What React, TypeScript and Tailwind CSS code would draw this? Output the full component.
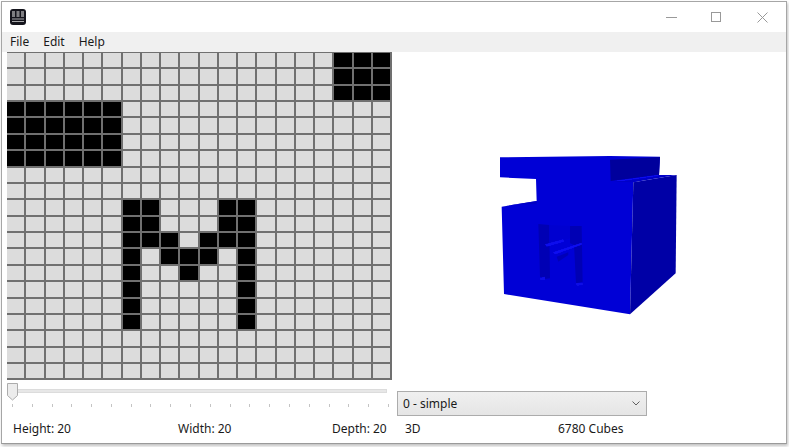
const FONT = "font-['Noto_Sans',sans-serif]";

const blackCells = new Set<string>();
const mark = (r: number, cols: number[]) => cols.forEach((c) => blackCells.add(`${r}-${c}`));
for (let r = 0; r < 3; r++) mark(r, [17, 18, 19]);
for (let r = 3; r < 7; r++) mark(r, [0, 1, 2, 3, 4, 5]);
mark(9, [6, 7, 11, 12]);
mark(10, [6, 7, 11, 12]);
mark(11, [6, 7, 8, 10, 11, 12]);
mark(12, [6, 8, 9, 10, 12]);
mark(13, [6, 9, 12]);
for (let r = 14; r < 17; r++) mark(r, [6, 12]);

function PixelGrid() {
  const cells = [];
  for (let r = 0; r < 20; r++) {
    for (let c = 0; c < 20; c++) {
      cells.push(
        <div key={`${r}-${c}`} className={blackCells.has(`${r}-${c}`) ? "bg-black" : "bg-[#dcdcdc]"} />
      );
    }
  }
  return (
    <div className="grid grid-cols-[repeat(20,1fr)] grid-rows-[repeat(20,1fr)] gap-[2px] w-[385px] h-[333px] bg-[#707070] pr-[2px] pb-[2px] pt-px">
      {cells}
    </div>
  );
}

function AppIcon() {
  return (
    <svg width="16" height="16" viewBox="0 0 16 16">
      <rect x="0" y="0" width="16" height="16" rx="3" fill="#14141c" />
      <g fill="#e8e8e8">
        <rect x="2" y="2.5" width="3" height="1" />
        <rect x="2" y="4.5" width="3" height="1" />
        <rect x="2" y="6.5" width="3" height="1" />
        <rect x="6.5" y="2.5" width="3" height="1" />
        <rect x="6.5" y="4.5" width="3" height="1" />
        <rect x="6.5" y="6.5" width="3" height="1" />
        <rect x="11" y="2.5" width="3" height="1" />
        <rect x="11" y="4.5" width="3" height="1" />
        <rect x="11" y="6.5" width="3" height="1" />
        <rect x="2" y="9.5" width="12" height="1" opacity="0.7" />
        <rect x="2" y="12" width="12" height="1" opacity="0.7" />
      </g>
    </svg>
  );
}

function WindowControls() {
  return (
    <div className="flex items-center ml-auto">
      <svg width="11" height="10" viewBox="0 0 11 10" className="mr-[34px]">
        <line x1="0" y1="5.5" x2="11" y2="5.5" stroke="#999999" strokeWidth="1" />
      </svg>
      <svg width="10" height="10" viewBox="0 0 10 10" className="mr-[36px]">
        <rect x="0.5" y="0.5" width="9" height="9" fill="none" stroke="#999999" strokeWidth="1" />
      </svg>
      <svg width="11" height="11" viewBox="0 0 11 11" className="mr-[18px]">
        <path d="M0.5 0.5L10.5 10.5M10.5 0.5L0.5 10.5" stroke="#999999" strokeWidth="1" />
      </svg>
    </div>
  );
}

function Slider() {
  const ticks = Array.from({ length: 20 }, (_, i) => i);
  return (
    <div className="flex flex-col w-[385px] h-[36px] pt-[3px]">
      <div className="relative h-[18px]">
        <div className="absolute left-[1px] right-[5px] top-[6px] h-[4px] bg-[#e7e7e7] border border-[#dcdcdc]" />
        <svg width="12" height="18" viewBox="0 0 12 18" className="absolute left-0 top-0">
          <path d="M0.5 0.5H10.5V12.5L5.5 17L0.5 12.5Z" fill="#ececec" stroke="#acacac" strokeWidth="1" />
        </svg>
      </div>
      <div className="flex justify-between w-[377px] ml-[5px] mt-[3px]">
        {ticks.map((t) => (
          <div key={t} className="w-px h-[3px] bg-[#c4c4c4]" />
        ))}
      </div>
    </div>
  );
}

function Cube() {
  return (
    <svg width="200" height="180" viewBox="0 0 600 540" className="mt-[93px] ml-[93px]">
      <defs>
        <filter id="soft">
          <feGaussianBlur stdDeviation="1" />
        </filter>
      </defs>
      <g filter="url(#soft)">
        <polygon points="30,37 360,33 510,35 507,92 430,112 420,508 42,447 35,185 140,168 138,102 30,97" fill="#0505d6" />
        <polygon points="430,112 560,90 557,385 420,508" fill="#0000a6" />
        <polygon points="360,44 510,36 507,90 362,108" fill="#00009c" />
        <polygon points="372,110 507,90 560,90 430,112" fill="#0000c8" />
        <polygon points="372,108 505,89 505,93 400,108" fill="#0a0af0" />
        <polygon points="35,185 140,168 140,178 90,178" fill="#0606c4" />
        <polygon points="145,237 178,240 180,400 163,402 150,395" fill="#0000b4" />
        <polygon points="240,243 275,243 278,415 258,415 252,300 240,295" fill="#0000b4" />
        <polygon points="178,240 240,243 240,280 178,300" fill="#0505d0" />
        <polygon points="165,298 220,283 222,290 170,305" fill="#0a0aee" />
        <polygon points="190,322 275,293 275,299 195,328" fill="#1010f4" />
        <polygon points="200,335 235,322 235,330 205,350" fill="#0000b8" />
        <polygon points="150,398 165,395 165,405 152,405" fill="#0a0ae8" />
        <polygon points="258,415 278,412 278,420 260,422" fill="#0a0ae8" />
      </g>
    </svg>
  );
}

export default function App() {
  return (
    <div className={`w-[789px] h-[447px] bg-white overflow-hidden text-[12px] leading-none text-[#1a1a1a] ${FONT}`}>
      <div className="w-[786px] h-[443px] ml-px mt-px flex flex-col border border-[#a6a6a6] border-b-[#9a9a9a] shadow-[1px_2px_3px_rgba(0,0,0,0.25)] bg-white">
        <div className="h-[30px] flex items-center pl-[8px] shrink-0">
          <AppIcon />
          <WindowControls />
        </div>
        <div className="h-[20px] bg-[#f0f0f0] flex items-center pl-[8px] gap-[14px] shrink-0">
          <span>File</span>
          <span>Edit</span>
          <span>Help</span>
        </div>
        <div className="flex flex-1 min-h-0">
          <div className="pl-[5px] flex flex-col">
            <PixelGrid />
            <Slider />
          </div>
          <div className="flex flex-col flex-1 pl-[5px]">
            <div className="h-[339px]">
              <Cube />
            </div>
            <div className="w-[250px] h-[25px] border border-[#acacac] bg-gradient-to-b from-[#f0f0f0] to-[#e5e5e5] flex items-center px-[5px]">
              <span>0 - simple</span>
              <svg width="8" height="5" viewBox="0 0 8 5" className="ml-auto mr-[1px]">
                <path d="M0.5 0.5L4 4L7.5 0.5" fill="none" stroke="#606060" strokeWidth="1" />
              </svg>
            </div>
          </div>
        </div>
        <div className="h-[27px] flex items-center shrink-0 pb-[1px]">
          <span className="w-[176px] pl-[11px]">Height: 20</span>
          <span className="w-[154px]">Width: 20</span>
          <span className="w-[73px]">Depth: 20</span>
          <span className="w-[153px]">3D</span>
          <span>6780 Cubes</span>
        </div>
      </div>
    </div>
  );
}
